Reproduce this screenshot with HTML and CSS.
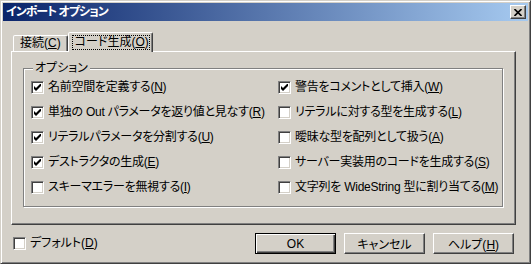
FILE: index.html
```html
<!DOCTYPE html>
<html lang="ja">
<head>
    <meta charset="UTF-8">
    <title>インポート オプション</title>
    <link rel="stylesheet" href="styles.css">
</head>
<body>
    <div class="window">
        <div class="titlebar">
            <span class="title">インポート オプション</span>
            <div class="close">
                <svg width="8" height="7" viewBox="0 0 8 7"><path d="M0.5 0 L7.5 7 M7.5 0 L0.5 7" stroke="#000" stroke-width="1.6"/></svg>
            </div>
        </div>
        <div class="content">
            <div class="tabs">
                <div class="tab">接続(<u>C</u>)</div>
                <div class="tab active"><span class="focus">コード生成(<u>O</u>)</span></div>
            </div>
            <div class="panel">
                <div class="group">
                    <span class="legend">オプション</span>
                    <div class="options">
                        <div class="check"><span class="box checked"></span><span>名前空間を定義する(<u>N</u>)</span></div>
                        <div class="check"><span class="box checked"></span><span>警告をコメントとして挿入(<u>W</u>)</span></div>
                        <div class="check"><span class="box checked"></span><span>単独の Out パラメータを返り値と見なす(<u>R</u>)</span></div>
                        <div class="check"><span class="box"></span><span>リテラルに対する型を生成する(<u>L</u>)</span></div>
                        <div class="check"><span class="box checked"></span><span>リテラルパラメータを分割する(<u>U</u>)</span></div>
                        <div class="check"><span class="box"></span><span>曖昧な型を配列として扱う(<u>A</u>)</span></div>
                        <div class="check"><span class="box checked"></span><span>デストラクタの生成(<u>E</u>)</span></div>
                        <div class="check"><span class="box"></span><span>サーバー実装用のコードを生成する(<u>S</u>)</span></div>
                        <div class="check"><span class="box"></span><span>スキーマエラーを無視する(<u>I</u>)</span></div>
                        <div class="check"><span class="box"></span><span>文字列を WideString 型に割り当てる(<u>M</u>)</span></div>
                    </div>
                </div>
            </div>
            <div class="footer">
                <div class="check default"><span class="box"></span><span>デフォルト(<u>D</u>)</span></div>
                <div class="buttons">
                    <div class="btn primary"><span>OK</span></div>
                    <div class="btn"><span>キャンセル</span></div>
                    <div class="btn"><span>ヘルプ(<u>H</u>)</span></div>
                </div>
            </div>
        </div>
    </div>
</body>
</html>
```

FILE: styles.css
```css
* {
    margin: 0;
    padding: 0;
    box-sizing: border-box;
}
body {
    background: #d4d0c8;
    font-family: "Liberation Sans", "Noto Sans CJK JP", sans-serif;
    font-feature-settings: "palt";
    font-size: 12px;
    color: #000;
}
u {
    text-decoration: underline;
    text-underline-offset: 1px;
}
.window {
    width: 531px;
    height: 264px;
    background: #d4d0c8;
    border: 1px solid;
    border-color: #d4d0c8 #404040 #404040 #d4d0c8;
    box-shadow: inset 1px 1px 0 #fff, inset -1px -1px 0 #808080;
    padding: 2px;
}
.titlebar {
    height: 18px;
    display: flex;
    align-items: center;
    justify-content: space-between;
    padding: 0 2px 0 3px;
    background: linear-gradient(to right, #0a246a, #a6caf0);
}
.title {
    color: #fff;
    font-weight: bold;
    line-height: 18px;
    letter-spacing: -1px;
}
.close {
    width: 16px;
    height: 14px;
    display: flex;
    align-items: center;
    justify-content: center;
    background: #d4d0c8;
    border: 1px solid;
    border-color: #fff #404040 #404040 #fff;
    box-shadow: inset -1px -1px 0 #808080;
}
.content {
    padding: 11px 12px 0 8px;
}
.tabs {
    display: flex;
    align-items: flex-end;
    height: 19px;
    padding-left: 2px;
    position: relative;
    z-index: 1;
}
.tab {
    height: 16px;
    line-height: 14px;
    padding: 0 6px;
    background: #d4d0c8;
    border: 1px solid;
    border-bottom: none;
    border-color: #fff #404040 transparent #fff;
    border-radius: 2px 2px 0 0;
    box-shadow: inset -1px 0 0 #808080;
    white-space: nowrap;
}
.tab.active {
    height: 20px;
    width: 85px;
    margin-bottom: -1px;
    padding: 2px 2px 0 3px;
}
.focus {
    display: block;
    border: 1px dotted #000;
    line-height: 13px;
    padding: 0 2px;
}
.panel {
    height: 174px;
    border: 1px solid;
    border-color: #fff #404040 #404040 #fff;
    box-shadow: inset -1px -1px 0 #808080;
    padding: 16px 12px 0 11px;
}
.group {
    position: relative;
    height: 139px;
    border: 1px solid #808080;
    box-shadow: inset 1px 1px 0 #fff, 1px 1px 0 #fff;
    padding: 12px 0 0 7px;
}
.legend {
    position: absolute;
    top: -8px;
    left: 9px;
    padding: 0 2px;
    line-height: 14px;
    background: #d4d0c8;
}
.options {
    display: grid;
    grid-template-columns: 247px 1fr;
    grid-auto-rows: 25px;
    letter-spacing: -0.25px;
}
.check {
    display: flex;
    align-items: flex-start;
    gap: 4px;
    line-height: 13px;
    white-space: nowrap;
}
.box {
    width: 13px;
    height: 13px;
    flex: none;
    background: #fff;
    border: 1px solid;
    border-color: #808080 #fff #fff #808080;
    box-shadow: inset 1px 1px 0 #404040, inset -1px -1px 0 #d4d0c8;
}
.box.checked {
    background: #fff url("data:image/svg+xml;utf8,<svg xmlns='http://www.w3.org/2000/svg' width='7' height='7'><polygon points='0,2 2,4 7,-1 7,2 2,7 0,5' fill='black'/></svg>") no-repeat 2px 2px;
}
.footer {
    display: flex;
    align-items: center;
    justify-content: space-between;
    margin-top: 8px;
}
.default {
    margin-left: 2px;
    align-items: center;
}
.buttons {
    display: flex;
    gap: 8px;
    margin-right: 2px;
}
.btn {
    width: 81px;
    height: 21px;
    display: flex;
    align-items: center;
    justify-content: center;
    border: 1px solid;
    border-color: #fff #404040 #404040 #fff;
    box-shadow: inset -1px -1px 0 #808080;
}
.btn.primary {
    border: 1px solid #000;
    box-shadow: inset 1px 1px 0 #fff, inset -1px -1px 0 #404040, inset -2px -2px 0 #808080;
}
```
